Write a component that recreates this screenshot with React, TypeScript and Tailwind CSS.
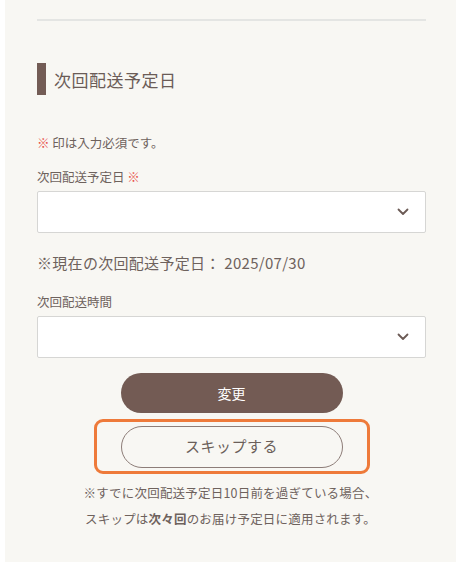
import React from "react";

const Chevron = () => (
  <svg width="12" height="8" viewBox="0 0 12 8" className="block">
    <path d="M1.5 1.5 L6 6 L10.5 1.5" fill="none" stroke="#6b5a55" strokeWidth="1.8" strokeLinecap="round" strokeLinejoin="round" />
  </svg>
);

const Select = () => (
  <div className="h-[42px] w-full bg-white border border-[#d6d6d4] rounded-[2px] flex items-center justify-end pr-[16px]">
    <Chevron />
  </div>
);

export default function App() {
  return (
    <div
      className="w-[458px] h-[562px] bg-white pl-[5px] pr-[2px] text-[#6e625d]"
      style={{ fontFamily: '"Noto Sans CJK JP", "Noto Sans", sans-serif' }}
    >
      <div className="h-full bg-[#f8f7f3] pl-[32px] pr-[30px] pt-[19px]">
        <div className="h-[2px] bg-[#e4e5e3]" />
        <div className="mt-[42px] flex items-center h-[32px]">
          <div className="w-[9px] h-[32px] bg-[#735c55]" />
          <div className="ml-[8px] text-[17px] leading-none tracking-[0.5px] text-[#6b5c57]">次回配送予定日</div>
        </div>
        <div className="mt-[39px] text-[12.5px] leading-[18px]">
          <span className="text-[#e8514a]">※</span> 印は入力必須です。
        </div>
        <div className="mt-[16px] text-[12.5px] leading-[18px]">
          次回配送予定日 <span className="text-[#e8514a]">※</span>
        </div>
        <div className="mt-[5px]">
          <Select />
        </div>
        <div className="mt-[19px] text-[15px] leading-[22px] tracking-[0.3px]">※現在の次回配送予定日： 2025/07/30</div>
        <div className="mt-[19px] text-[12.5px] leading-[18px]">次回配送時間</div>
        <div className="mt-[5px]">
          <Select />
        </div>
        <div className="mt-[15px] flex justify-center">
          <button className="w-[222px] h-[40px] rounded-full bg-[#735b54] text-white text-[14px]">変更</button>
        </div>
        <div className="mt-[6px] flex justify-center">
          <div className="w-[276px] h-[55px] border-[3px] border-[#ee7a3a] rounded-[9px] flex items-center justify-center">
            <button className="w-[222px] h-[42px] rounded-full border border-[#8d7d78] text-[15px] text-[#6b5f5a] tracking-[0.5px]">
              スキップする
            </button>
          </div>
        </div>
        <div className="mt-[6px] text-center text-[12.5px] leading-[26px] pr-[2px] tracking-[0.2px]">
          <div>※すでに次回配送予定日10日前を過ぎている場合、</div>
          <div>
            スキップは<span className="font-bold">次々回</span>のお届け予定日に適用されます。
          </div>
        </div>
      </div>
    </div>
  );
}
